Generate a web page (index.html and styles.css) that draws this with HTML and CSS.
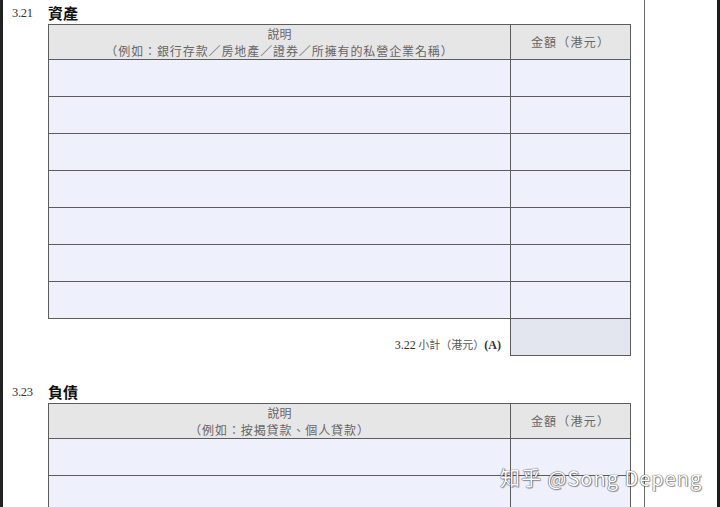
FILE: index.html
```html
<!DOCTYPE html>
<html lang="zh-Hant">
<head>
<meta charset="utf-8">
<link rel="stylesheet" href="styles.css">
</head>
<body>
<div class="sheet">
  <div class="page">
    <div class="heading first">
      <span class="num">3.21</span>
      <span class="title">資產</span>
    </div>
    <table class="form">
      <tr class="head">
        <td class="desc">說明<br><span class="eg">（例如：銀行存款／房地產／證券／所擁有的私營企業名稱）</span></td>
        <td class="amt">金額（港元）</td>
      </tr>
      <tr class="row"><td></td><td></td></tr>
      <tr class="row"><td></td><td></td></tr>
      <tr class="row"><td></td><td></td></tr>
      <tr class="row"><td></td><td></td></tr>
      <tr class="row"><td></td><td></td></tr>
      <tr class="row"><td></td><td></td></tr>
      <tr class="row"><td></td><td></td></tr>
      <tr class="sub">
        <td class="sublabel"><span class="n">3.22</span> 小計（港元）<span class="a">(A)</span></td>
        <td class="subval"></td>
      </tr>
    </table>
    <div class="heading second">
      <span class="num">3.23</span>
      <span class="title">負債</span>
    </div>
    <table class="form">
      <tr class="head">
        <td class="desc">說明<br><span class="eg">（例如：按揭貸款、個人貸款）</span></td>
        <td class="amt">金額（港元）</td>
      </tr>
      <tr class="row"><td></td><td></td></tr>
      <tr class="row"><td></td><td></td></tr>
    </table>
  </div>
  <div class="margin"></div>
  <div class="watermark">知乎 @Song Depeng</div>
</div>
</body>
</html>
```

FILE: styles.css
```css
html, body {
  margin: 0;
  padding: 0;
  background: #fff;
  overflow: hidden;
}
.sheet {
  position: relative;
  display: flex;
  width: 720px;
  height: 507px;
  overflow: hidden;
  font-family: "Liberation Serif", "Noto Sans CJK TC", serif;
}
.page {
  width: 632px;
  flex: none;
  border-left: 3px solid #222;
  border-right: 1px solid #6a6a6a;
  padding-left: 9px;
}
.margin {
  flex: 1;
  border-right: 3px solid #1c1c1c;
}
.heading {
  display: flex;
  align-items: center;
  height: 24px;
}
.heading.second {
  margin-top: 23px;
  height: 24px;
}
.num {
  width: 36px;
  font-size: 12.5px;
  color: #333;
  letter-spacing: -0.3px;
  padding-top: 2px;
}
.title {
  font-family: "Noto Sans CJK TC", sans-serif;
  font-weight: 700;
  font-size: 15px;
  color: #111;
  line-height: 1;
}
.form {
  border-collapse: collapse;
  width: 583px;
  margin-left: 36px;
  table-layout: fixed;
}
.form td {
  border: 1px solid #5c5c5c;
  padding: 0;
}
.form td:first-child { width: 461px; }
.head td {
  background: #e6e6e6;
  height: 33px;
  font-family: "Noto Sans CJK TC", sans-serif;
  font-size: 12px;
  color: #666;
  text-align: center;
  line-height: 17px;
}
.head .desc { vertical-align: top; }
.head .eg { letter-spacing: 0.9px; }
.head .amt { vertical-align: middle; padding-bottom: 1px; letter-spacing: 1.2px; }
.row td {
  background: #eef0fc;
  height: 36px;
}
.sub td { height: 36px; }
.form .sublabel {
  border: none;
  border-top: 1px solid #5c5c5c;
  text-align: right;
  vertical-align: top;
  padding-right: 9px;
  padding-top: 17px;
  height: 19px;
  line-height: 16px;
  font-family: "Noto Sans CJK TC", sans-serif;
  font-size: 11px;
  color: #555;
}
.sublabel .n, .sublabel .a {
  font-family: "Liberation Serif", serif;
  font-size: 12px;
  color: #333;
}
.sublabel .a { font-weight: 700; }
.subval { background: #e4e6ef; }
.watermark {
  position: absolute;
  left: 500px;
  top: 463px;
  font-family: "Noto Sans CJK SC", sans-serif;
  font-size: 20px;
  color: #fff;
  white-space: nowrap;
  text-shadow: 0 0 1px #444, 0 0 1px #444, 1px 1px 1px rgba(0,0,0,0.35);
  letter-spacing: 1px;
}
```
